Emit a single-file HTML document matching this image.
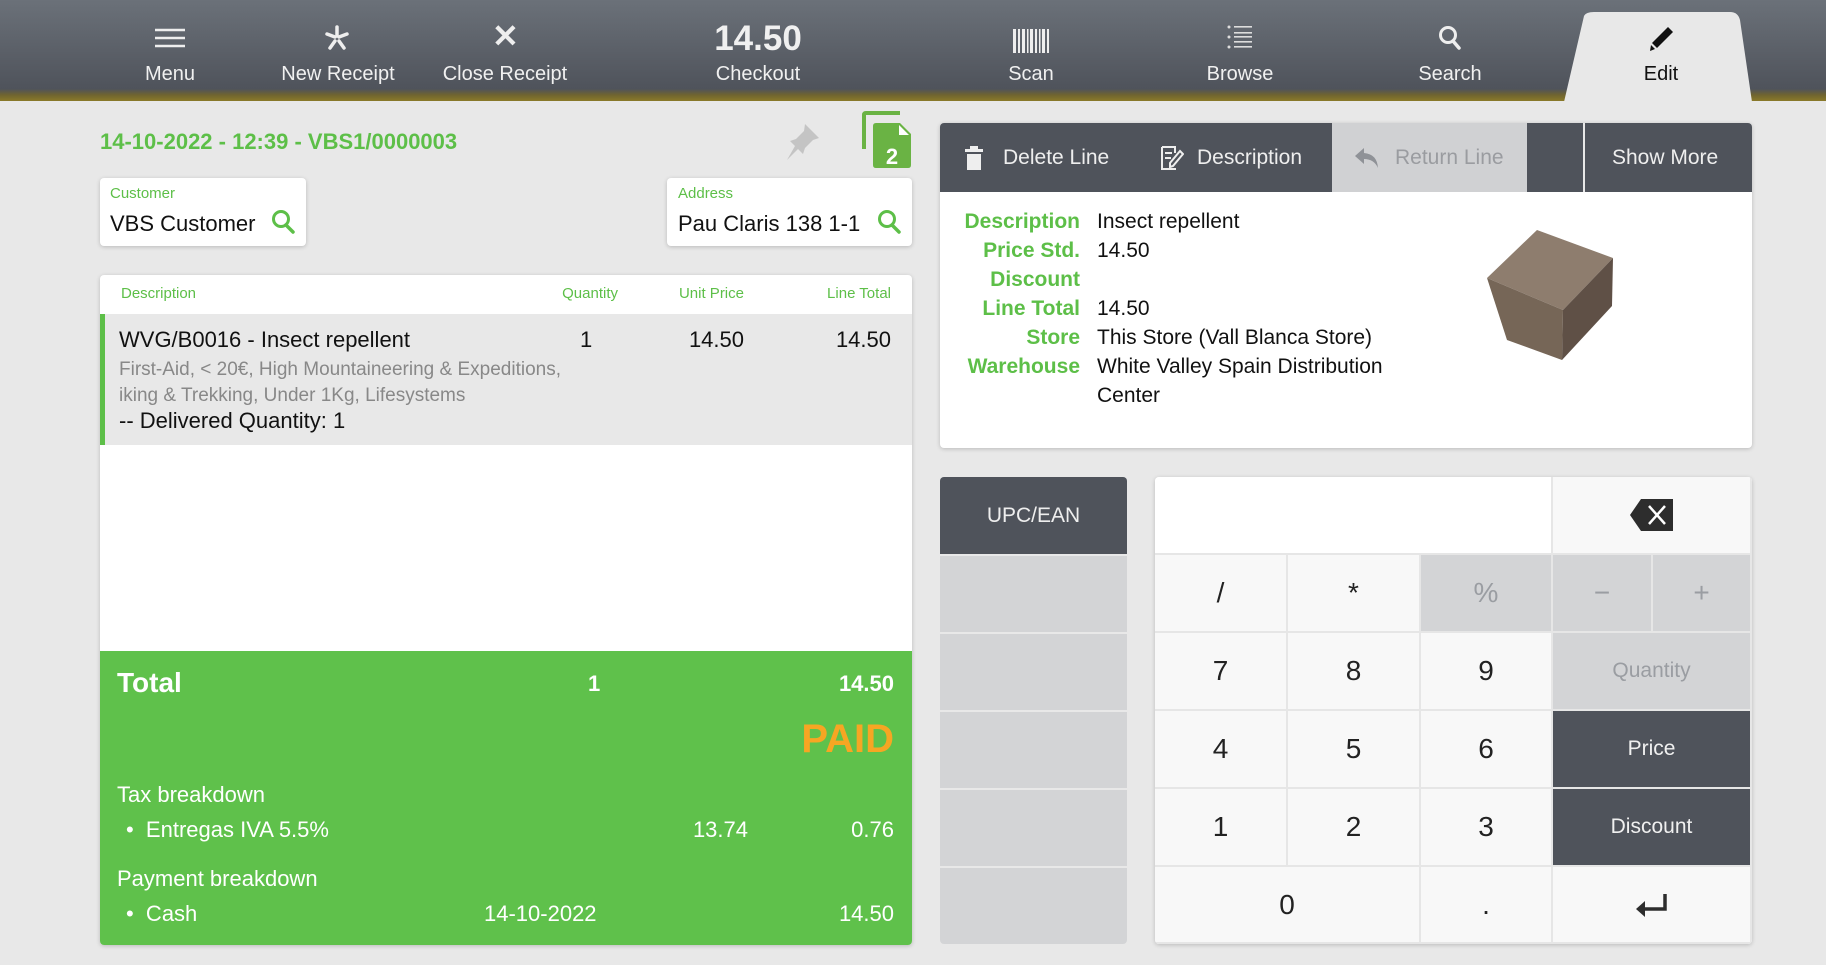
<!DOCTYPE html>
<html><head><meta charset="utf-8"><style>
*{margin:0;padding:0;box-sizing:border-box}
body{width:1826px;height:965px;background:#e8e8e8;font-family:"Liberation Sans",sans-serif;position:relative;overflow:hidden;color:#222}
.a{position:absolute;white-space:nowrap;line-height:1}
.hdr{position:absolute;left:0;top:0;width:1826px;height:101px;background:linear-gradient(#6b7179,#4f535b 88%,#6f6430 94%,#8a7a2a 100%)}
.nav{position:absolute;top:64px;color:#f0f0f0;font-size:20px;text-align:center;width:200px;line-height:1}
.g{color:#5dbf48}
.card{position:absolute;background:#fff;border-radius:4px;box-shadow:0 1px 4px rgba(0,0,0,.2)}
.k{position:absolute;display:flex;align-items:center;justify-content:center;font-size:28px;color:#222;background:#f8f8f8;border-right:2px solid #e6e6e6;border-bottom:2px solid #e6e6e6}
.gr{background:#d3d4d6;color:#9a9da2}
.dk{background:#4f535b;color:#f0f0f0}
.lab{position:absolute;right:0;width:150px;text-align:right}
</style></head><body>
<div class="hdr"></div>
<svg class="a" style="left:1562px;top:10px" width="200" height="92"><path d="M22 6 Q24 2 32 2 L168 2 Q176 2 178 10 L190 92 L2 92 Z" fill="#e8e8e8"/></svg>
<svg class="a" style="left:154px;top:27px" width="32" height="22"><g stroke="#eee" stroke-width="2.5"><line x1="1" y1="3" x2="31" y2="3"/><line x1="1" y1="11" x2="31" y2="11"/><line x1="1" y1="19" x2="31" y2="19"/></g></svg>
<svg class="a" style="left:324px;top:25px" width="26" height="26"><g stroke="#eee" stroke-width="3.5" stroke-linecap="round"><line x1="13" y1="2" x2="13" y2="11"/><line x1="3" y1="9" x2="11" y2="12"/><line x1="23" y1="9" x2="15" y2="12"/><line x1="6" y1="23" x2="11" y2="16"/><line x1="20" y1="23" x2="15" y2="16"/></g></svg>
<div class="a" style="left:492px;top:20px;font-size:32px;color:#eee;font-weight:bold">✕</div>
<div class="a" style="left:658px;top:21px;width:200px;text-align:center;font-size:35px;font-weight:bold;color:#f0f0f0">14.50</div>
<svg class="a" style="left:1013px;top:29px" width="36" height="24"><g fill="#eee"><rect x="0" width="3" height="24"/><rect x="5" width="2" height="24"/><rect x="9" width="3" height="24"/><rect x="14" width="1.5" height="24"/><rect x="17" width="3" height="24"/><rect x="22" width="2" height="24"/><rect x="26" width="1.5" height="24"/><rect x="29" width="3" height="24"/><rect x="34" width="2" height="24"/></g></svg>
<svg class="a" style="left:1227px;top:25px" width="26" height="24"><g fill="#ddd"><circle cx="2" cy="2" r="1.5"/><circle cx="2" cy="12" r="1.5"/><circle cx="2" cy="22" r="1.5"/><rect x="7" y="1" width="18" height="1.6"/><rect x="7" y="7" width="18" height="1.6"/><rect x="7" y="11" width="18" height="1.6"/><rect x="7" y="16" width="18" height="1.6"/><rect x="7" y="21" width="18" height="1.6"/></g></svg>
<svg class="a" style="left:1438px;top:25px" width="26" height="26"><circle cx="10" cy="10" r="7.5" stroke="#eee" stroke-width="3" fill="none"/><line x1="15" y1="16" x2="21" y2="23" stroke="#eee" stroke-width="3.5" stroke-linecap="round"/></svg>
<svg class="a" style="left:1648px;top:26px" width="26" height="26"><path d="M20 1 L25 6 L9 22 L4 17 Z" fill="#111"/><path d="M3 19 L7 23 L2 25 Z" fill="#111"/></svg>
<div class="nav" style="left:70px">Menu</div>
<div class="nav" style="left:238px">New Receipt</div>
<div class="nav" style="left:405px">Close Receipt</div>
<div class="nav" style="left:658px">Checkout</div>
<div class="nav" style="left:931px">Scan</div>
<div class="nav" style="left:1140px">Browse</div>
<div class="nav" style="left:1350px">Search</div>
<div class="nav" style="left:1561px;color:#111">Edit</div>

<div class="a g" style="left:100px;top:131px;font-size:22px;font-weight:bold">14-10-2022 - 12:39 - VBS1/0000003</div>
<svg class="a" style="left:783px;top:121px" width="40" height="40"><path d="M22 3 L36 17 L30 19 L22 27 L20 33 L15 28 L4 39 L12 25 L7 20 L13 18 L21 10 Z" fill="#c4c4c4"/></svg>
<svg class="a" style="left:862px;top:111px" width="52" height="60"><path d="M2 38 V4 Q2 2 4 2 H38" stroke="#6ab344" stroke-width="4" fill="none"/><path d="M14 12 H38 L49 23 V54 Q49 57 46 57 H14 Q11 57 11 54 V15 Q11 12 14 12Z" fill="#6ab344"/><path d="M37 14 L47 24 H37Z" fill="#fff"/><text x="30" y="53" font-family="Liberation Sans" font-weight="bold" font-size="22" fill="#fff" text-anchor="middle">2</text></svg>

<div class="card" style="left:100px;top:178px;width:206px;height:68px"></div>
<div class="a g" style="left:110px;top:186px;font-size:15px">Customer</div>
<div class="a" style="left:110px;top:213px;font-size:22px;color:#111">VBS Customer</div>
<svg class="a" style="left:271px;top:209px" width="26" height="26"><circle cx="10" cy="10" r="7.5" stroke="#5dbf48" stroke-width="3" fill="none"/><line x1="15" y1="16" x2="22" y2="23" stroke="#5dbf48" stroke-width="3.5" stroke-linecap="round"/></svg>
<div class="card" style="left:667px;top:178px;width:245px;height:68px"></div>
<div class="a g" style="left:678px;top:186px;font-size:15px">Address</div>
<div class="a" style="left:678px;top:213px;font-size:22px;color:#111">Pau Claris 138 1-1</div>
<svg class="a" style="left:877px;top:209px" width="26" height="26"><circle cx="10" cy="10" r="7.5" stroke="#5dbf48" stroke-width="3" fill="none"/><line x1="15" y1="16" x2="22" y2="23" stroke="#5dbf48" stroke-width="3.5" stroke-linecap="round"/></svg>

<div class="card" style="left:100px;top:275px;width:812px;height:670px;overflow:hidden">
 <div style="position:absolute;left:0;top:39px;width:812px;height:131px;background:#e8e8e8;border-left:5px solid #5dbf48"></div>
 <div style="position:absolute;left:0;top:376px;width:812px;height:294px;background:#5fc14b"></div>
</div>
<div class="a g" style="left:121px;top:286px;font-size:15px">Description</div>
<div class="a g" style="left:518px;top:286px;width:100px;text-align:right;font-size:15px">Quantity</div>
<div class="a g" style="left:644px;top:286px;width:100px;text-align:right;font-size:15px">Unit Price</div>
<div class="a g" style="left:791px;top:286px;width:100px;text-align:right;font-size:15px">Line Total</div>
<div class="a" style="left:119px;top:329px;font-size:22px;color:#111">WVG/B0016 - Insect repellent</div>
<div class="a" style="left:580px;top:329px;font-size:22px;color:#111">1</div>
<div class="a" style="left:644px;top:329px;width:100px;text-align:right;font-size:22px;color:#111">14.50</div>
<div class="a" style="left:791px;top:329px;width:100px;text-align:right;font-size:22px;color:#111">14.50</div>
<div class="a" style="left:119px;top:360px;font-size:19px;color:#888">First-Aid, &lt; 20€, High Mountaineering &amp; Expeditions,</div>
<div class="a" style="left:119px;top:386px;font-size:19px;color:#888">iking &amp; Trekking, Under 1Kg, Lifesystems</div>
<div class="a" style="left:119px;top:410px;font-size:22px;color:#111">-- Delivered Quantity: 1</div>

<div class="a" style="left:117px;top:669px;font-size:28px;font-weight:bold;color:#fff">Total</div>
<div class="a" style="left:588px;top:673px;font-size:22px;font-weight:bold;color:#fff">1</div>
<div class="a" style="left:794px;top:673px;width:100px;text-align:right;font-size:22px;font-weight:bold;color:#fff">14.50</div>
<div class="a" style="left:694px;top:719px;width:200px;text-align:right;font-size:40px;font-weight:bold;color:#f6a623">PAID</div>
<div class="a" style="left:117px;top:784px;font-size:22px;color:#fff">Tax breakdown</div>
<div class="a" style="left:126px;top:819px;font-size:22px;color:#fff">•&nbsp; Entregas IVA 5.5%</div>
<div class="a" style="left:648px;top:819px;width:100px;text-align:right;font-size:22px;color:#fff">13.74</div>
<div class="a" style="left:794px;top:819px;width:100px;text-align:right;font-size:22px;color:#fff">0.76</div>
<div class="a" style="left:117px;top:868px;font-size:22px;color:#fff">Payment breakdown</div>
<div class="a" style="left:126px;top:903px;font-size:22px;color:#fff">•&nbsp; Cash</div>
<div class="a" style="left:484px;top:903px;font-size:22px;color:#fff">14-10-2022</div>
<div class="a" style="left:794px;top:903px;width:100px;text-align:right;font-size:22px;color:#fff">14.50</div>

<div class="card" style="left:940px;top:123px;width:812px;height:325px;overflow:hidden">
 <div style="position:absolute;left:0;top:0;width:812px;height:69px;background:#4f535b"></div>
 <div style="position:absolute;left:392px;top:0;width:195px;height:69px;background:#d0d1d3"></div>
 <div style="position:absolute;left:643px;top:0;width:2px;height:69px;background:#e8e8e8"></div>
</div>
<svg class="a" style="left:965px;top:146px" width="20" height="24"><rect x="5" y="0" width="8" height="3" fill="#eee"/><rect x="0" y="3" width="18" height="3" fill="#eee"/><rect x="2" y="8" width="14" height="16" fill="#eee"/></svg>
<div class="a" style="left:1003px;top:147px;font-size:21px;color:#eee">Delete Line</div>
<svg class="a" style="left:1160px;top:145px" width="24" height="26"><path d="M2 2 H15 L15 8 M2 2 V24 H16" stroke="#eee" stroke-width="2" fill="none"/><line x1="5" y1="8" x2="12" y2="8" stroke="#eee" stroke-width="2"/><line x1="5" y1="13" x2="11" y2="13" stroke="#eee" stroke-width="2"/><path d="M20 6 L23 9 L13 21 L10 22 L10 18 Z" stroke="#eee" stroke-width="2" fill="none"/></svg>
<div class="a" style="left:1197px;top:147px;font-size:21px;color:#eee">Description</div>
<svg class="a" style="left:1354px;top:146px" width="26" height="24"><path d="M10 2 L1 10 L10 18 V13 Q20 13 24 22 Q23 8 10 7 Z" fill="#8f9297"/></svg>
<div class="a" style="left:1395px;top:147px;font-size:21px;color:#9a9ca0">Return Line</div>
<div class="a" style="left:1612px;top:147px;font-size:21px;color:#eee">Show More</div>

<div class="lab g a" style="left:930px;top:211px;font-size:21px;font-weight:bold">Description</div>
<div class="lab g a" style="left:930px;top:240px;font-size:21px;font-weight:bold">Price Std.</div>
<div class="lab g a" style="left:930px;top:269px;font-size:21px;font-weight:bold">Discount</div>
<div class="lab g a" style="left:930px;top:298px;font-size:21px;font-weight:bold">Line Total</div>
<div class="lab g a" style="left:930px;top:327px;font-size:21px;font-weight:bold">Store</div>
<div class="lab g a" style="left:930px;top:356px;font-size:21px;font-weight:bold">Warehouse</div>
<div class="a" style="left:1097px;top:211px;font-size:21px;color:#111">Insect repellent</div>
<div class="a" style="left:1097px;top:240px;font-size:21px;color:#111">14.50</div>
<div class="a" style="left:1097px;top:298px;font-size:21px;color:#111">14.50</div>
<div class="a" style="left:1097px;top:327px;font-size:21px;color:#111">This Store (Vall Blanca Store)</div>
<div class="a" style="left:1097px;top:356px;font-size:21px;color:#111">White Valley Spain Distribution</div>
<div class="a" style="left:1097px;top:385px;font-size:21px;color:#111">Center</div>
<svg class="a" style="left:1485px;top:228px" width="135" height="135"><polygon points="2,50 52,2 128,30 78,82" fill="#8e7d6e"/><polygon points="2,50 78,82 77,132 22,112" fill="#766657"/><polygon points="78,82 128,30 127,78 77,132" fill="#5f5046"/></svg>

<div style="position:absolute;left:940px;top:477px;width:187px;height:467px;background:#d3d4d6;border-radius:4px;overflow:hidden">
 <div style="position:absolute;left:0;top:0;width:187px;height:77px;background:#4f535b"></div>
 <div style="position:absolute;left:0;top:77px;width:187px;height:2px;background:#e8e8e8"></div>
 <div style="position:absolute;left:0;top:155px;width:187px;height:2px;background:#e8e8e8"></div>
 <div style="position:absolute;left:0;top:233px;width:187px;height:2px;background:#e8e8e8"></div>
 <div style="position:absolute;left:0;top:311px;width:187px;height:2px;background:#e8e8e8"></div>
 <div style="position:absolute;left:0;top:389px;width:187px;height:2px;background:#e8e8e8"></div>
</div>
<div class="a" style="left:940px;top:505px;width:187px;text-align:center;font-size:21px;color:#eee">UPC/EAN</div>

<div class="card" style="left:1155px;top:477px;width:597px;height:467px;overflow:hidden;background:#f8f8f8">
 <div class="k" style="left:0;top:0;width:398px;height:78px;background:#fff"></div>
 <div class="k" style="left:398px;top:0;width:199px;height:78px"><svg width="46" height="34"><path d="M12 1 H44 V33 H12 L1 17 Z" fill="#2d2d2d"/><path d="M20 8 L36 26 M36 8 L20 26" stroke="#fff" stroke-width="2.5"/></svg></div>
 <div class="k" style="left:0;top:78px;width:133px;height:78px">/</div>
 <div class="k" style="left:133px;top:78px;width:133px;height:78px">*</div>
 <div class="k gr" style="left:266px;top:78px;width:132px;height:78px">%</div>
 <div class="k gr" style="left:398px;top:78px;width:100px;height:78px">−</div>
 <div class="k gr" style="left:498px;top:78px;width:99px;height:78px">+</div>
 <div class="k" style="left:0;top:156px;width:133px;height:78px">7</div>
 <div class="k" style="left:133px;top:156px;width:133px;height:78px">8</div>
 <div class="k" style="left:266px;top:156px;width:132px;height:78px">9</div>
 <div class="k gr" style="left:398px;top:156px;width:199px;height:78px;font-size:21px">Quantity</div>
 <div class="k" style="left:0;top:234px;width:133px;height:78px">4</div>
 <div class="k" style="left:133px;top:234px;width:133px;height:78px">5</div>
 <div class="k" style="left:266px;top:234px;width:132px;height:78px">6</div>
 <div class="k dk" style="left:398px;top:234px;width:199px;height:78px;font-size:21px">Price</div>
 <div class="k" style="left:0;top:312px;width:133px;height:78px">1</div>
 <div class="k" style="left:133px;top:312px;width:133px;height:78px">2</div>
 <div class="k" style="left:266px;top:312px;width:132px;height:78px">3</div>
 <div class="k dk" style="left:398px;top:312px;width:199px;height:78px;font-size:21px">Discount</div>
 <div class="k" style="left:0;top:390px;width:266px;height:77px">0</div>
 <div class="k" style="left:266px;top:390px;width:132px;height:77px">.</div>
 <div class="k" style="left:398px;top:390px;width:199px;height:77px"><svg width="34" height="26"><path d="M30 2 V17 H8" stroke="#2d2d2d" stroke-width="3.5" fill="none"/><path d="M1 17 L10 9 V25 Z" fill="#2d2d2d"/></svg></div>
</div>
</body></html>
